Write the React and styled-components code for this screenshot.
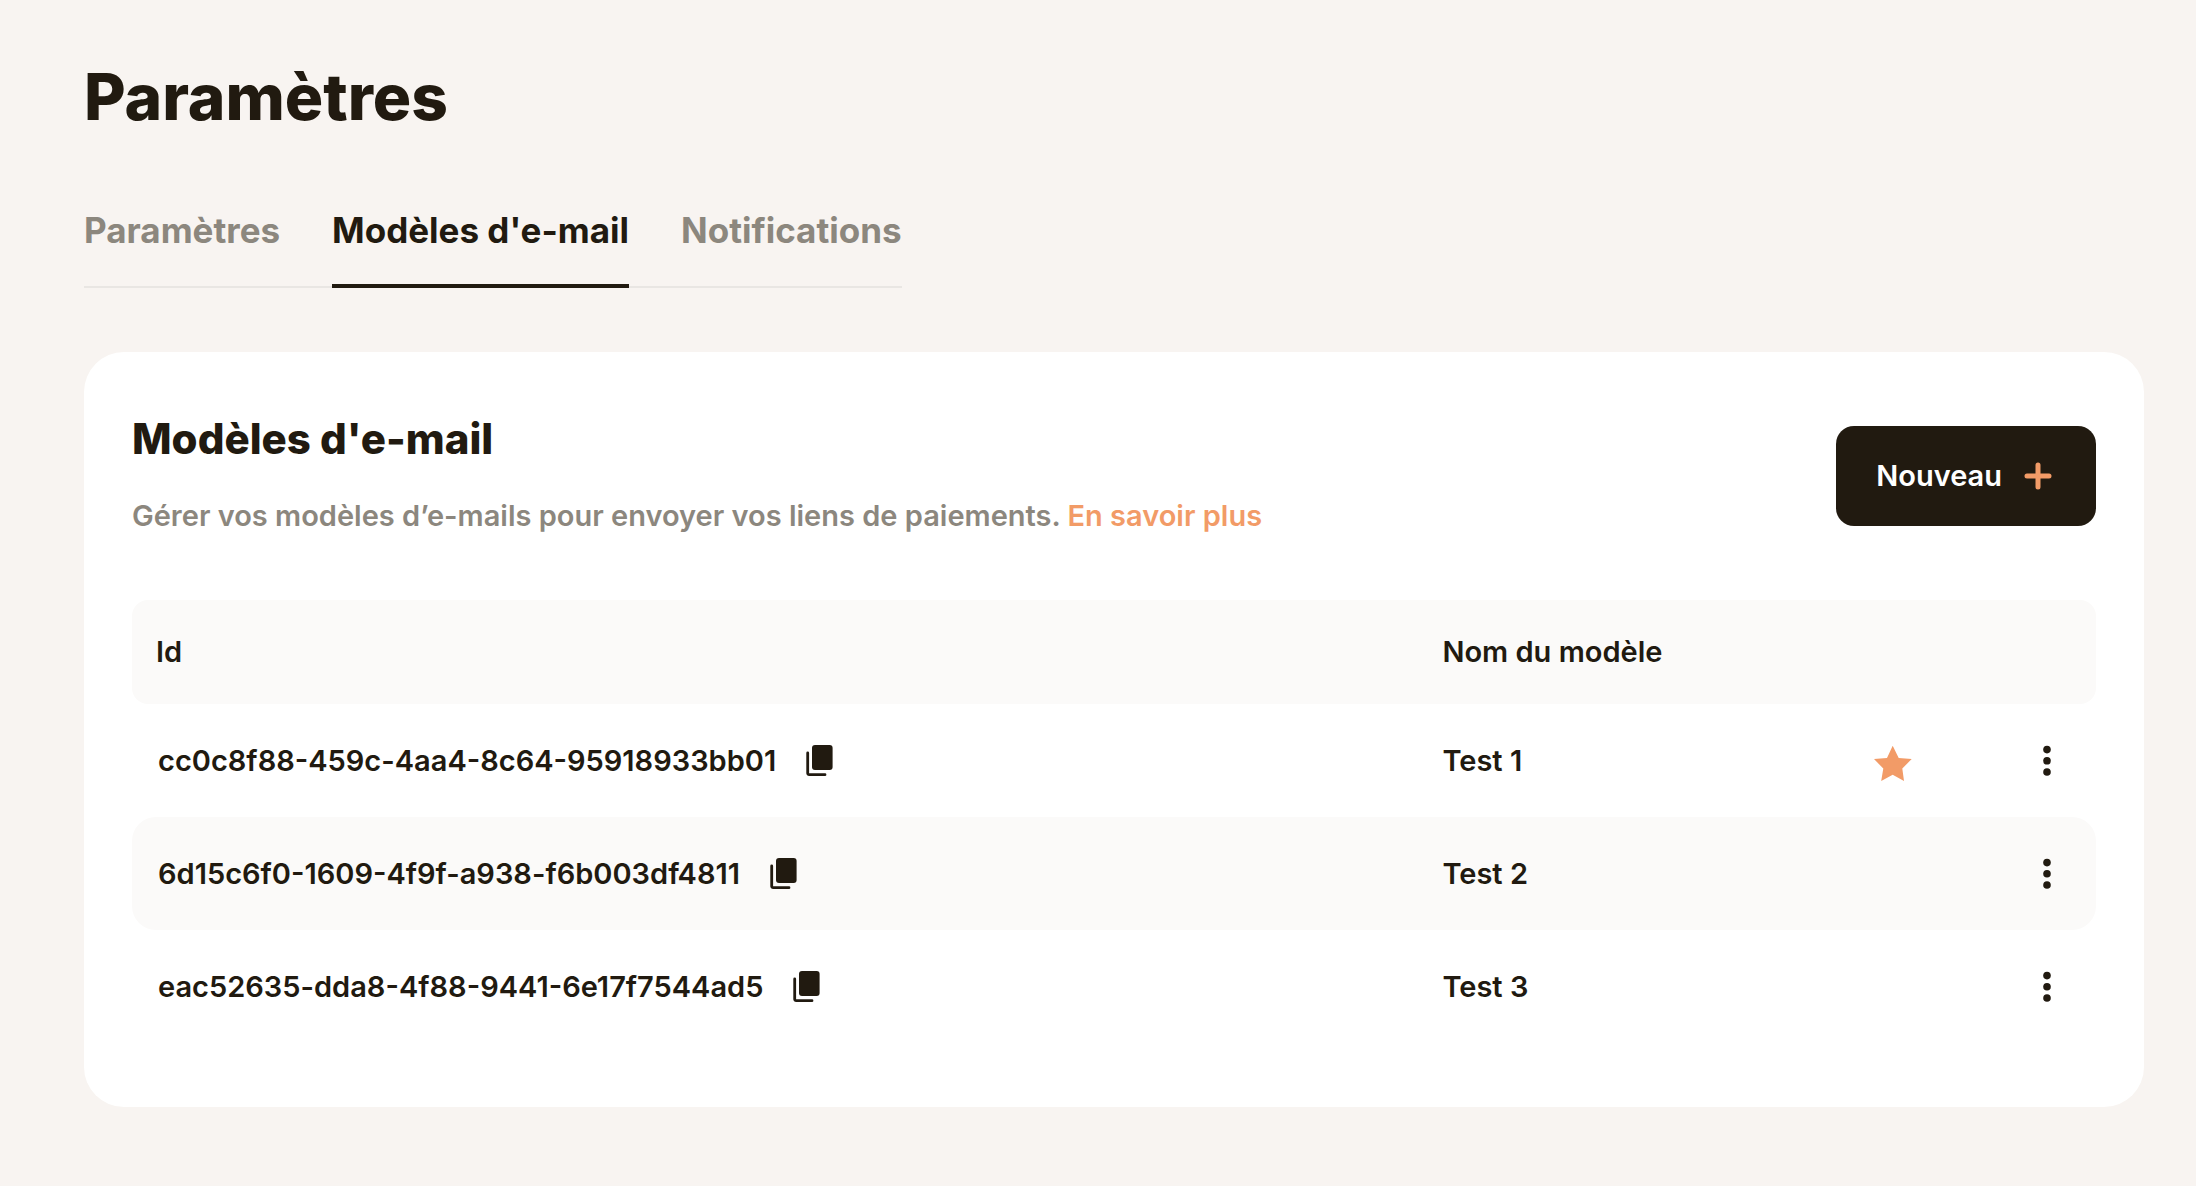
import React from "react";
import styled, { createGlobalStyle } from "styled-components";

const ink = "#211a10";
const muted = "#8c877e";
const accent = "#f29b67";
const stripe = "#fbfaf9";

const GlobalStyle = createGlobalStyle`
  *, *::before, *::after {
    box-sizing: border-box;
  }

  body {
    margin: 0;
    background: #f8f4f1;
    color: ${ink};
    font-family: Inter, "Liberation Sans", sans-serif;
    font-size: 29px;
    font-weight: 600;
    line-height: 44px;
  }
`;

const Page = styled.main`
  padding: 60px 52px 78px 84px;
`;

const PageTitle = styled.h1`
  margin: 0 0 76px;
  font-size: 64px;
  font-weight: 800;
  line-height: 74px;
`;

const Tabs = styled.nav`
  display: flex;
  gap: 52px;
  width: fit-content;
  margin-bottom: 64px;
  box-shadow: inset 0 -2px 0 #e9e6e3;
`;

const Tab = styled.a`
  padding-bottom: 34px;
  border-bottom: 4px solid ${({ $active }) => ($active ? ink : "transparent")};
  color: ${({ $active }) => ($active ? ink : muted)};
  font-size: 35px;
  font-weight: 700;
  line-height: 40px;
  text-decoration: none;
`;

const Card = styled.section`
  padding: 48px 48px 64px;
  border-radius: 40px;
  background: #fff;
`;

const CardHeader = styled.header`
  display: flex;
  align-items: center;
  justify-content: space-between;
  gap: 48px;
  margin-bottom: 48px;
  padding: 14px 0;
`;

const Heading = styled.div`
  display: grid;
  gap: 30px;
`;

const CardTitle = styled.h2`
  margin: 0;
  font-size: 42px;
  font-weight: 800;
  line-height: 50px;
`;

const Description = styled.p`
  margin: 0;
  color: ${muted};
`;

const MoreLink = styled.a`
  color: ${accent};
  text-decoration: none;
`;

const PrimaryButton = styled.button`
  display: flex;
  flex: none;
  align-items: center;
  gap: 20px;
  height: 100px;
  padding: 0 42px 0 40px;
  border: 0;
  border-radius: 18px;
  background: ${ink};
  color: #fff;
  font: inherit;
  cursor: pointer;
`;

const Table = styled.table`
  width: 100%;
  table-layout: fixed;
  border-collapse: separate;
  border-spacing: 0;
`;

const IdColumn = styled.col`
  width: 65.5%;
`;

const StarColumn = styled.col`
  width: 210px;
`;

const MenuColumn = styled.col`
  width: 98px;
`;

const HeadCell = styled.th`
  height: 104px;
  padding: 0 24px;
  background: ${stripe};
  font-weight: inherit;
  text-align: left;

  &:first-child {
    border-radius: 16px 0 0 16px;
  }

  &:last-child {
    border-radius: 0 16px 16px 0;
  }
`;

const Cell = styled.td`
  height: 113px;
  padding: 0 24px;

  &:first-child {
    border-radius: 24px 0 0 24px;
    padding-left: 26px;
  }

  &:last-child {
    border-radius: 0 24px 24px 0;
  }

  tr:nth-child(even) > & {
    background: ${stripe};
  }
`;

const IconCell = styled(Cell)`
  padding: 0;
`;

const Centered = styled.div`
  display: flex;
  justify-content: center;
`;

const IdGroup = styled.div`
  display: flex;
  align-items: center;
  gap: 30px;
`;

const IconButton = styled.button`
  display: flex;
  padding: 0;
  border: 0;
  background: none;
  color: ${ink};
  cursor: pointer;
`;

const PlusIcon = () => (
  <svg width="32" height="32" viewBox="0 0 32 32" fill="none" stroke={accent} strokeWidth="5" strokeLinecap="round" aria-hidden="true">
    <path d="M16 5v22M5 16h22" />
  </svg>
);

const CopyIcon = () => (
  <svg width="28" height="32" viewBox="0 0 28 32" fill="none" aria-hidden="true">
    <rect x="6" y="0" width="20.6" height="25" rx="3" fill="currentColor" />
    <path d="M1.7 8v20.3a1.4 1.4 0 0 0 1.4 1.4H19" stroke="currentColor" strokeWidth="2.8" strokeLinecap="round" />
  </svg>
);

const StarIcon = () => (
  <svg width="38" height="40" viewBox="0 -5 38 40" fill={accent} role="img" aria-label="Modèle par défaut">
    <path d="M18.7 -.3 24.7 12 37.7 13.1 28.3 22.4 30 35 18.7 28.8 7.2 35 9.3 22.4 0 13.1 13 12Z" />
  </svg>
);

const MenuIcon = () => (
  <svg width="32" height="32" viewBox="0 0 32 32" fill="currentColor" aria-hidden="true">
    <circle cx="16" cy="4.6" r="3.8" />
    <circle cx="16" cy="15.8" r="3.8" />
    <circle cx="16" cy="27" r="3.8" />
  </svg>
);

const tabs = [
  { label: "Paramètres" },
  { label: "Modèles d'e-mail", active: true },
  { label: "Notifications" },
];

const templates = [
  { id: "cc0c8f88-459c-4aa4-8c64-95918933bb01", name: "Test 1", isDefault: true },
  { id: "6d15c6f0-1609-4f9f-a938-f6b003df4811", name: "Test 2" },
  { id: "eac52635-dda8-4f88-9441-6e17f7544ad5", name: "Test 3" },
];

export default function App() {
  return (
    <>
      <GlobalStyle />
      <Page>
        <PageTitle>Paramètres</PageTitle>
        <Tabs>
          {tabs.map(({ label, active }) => (
            <Tab key={label} href="#" $active={active} aria-current={active ? "page" : undefined}>
              {label}
            </Tab>
          ))}
        </Tabs>
        <Card>
          <CardHeader>
            <Heading>
              <CardTitle>Modèles d'e-mail</CardTitle>
              <Description>
                Gérer vos modèles d’e-mails pour envoyer vos liens de paiements.{" "}
                <MoreLink href="#">En savoir plus</MoreLink>
              </Description>
            </Heading>
            <PrimaryButton type="button">
              Nouveau
              <PlusIcon />
            </PrimaryButton>
          </CardHeader>
          <Table>
            <colgroup>
              <IdColumn />
              <col />
              <StarColumn />
              <MenuColumn />
            </colgroup>
            <thead>
              <tr>
                <HeadCell scope="col">Id</HeadCell>
                <HeadCell scope="col">Nom du modèle</HeadCell>
                <HeadCell as="td" />
                <HeadCell as="td" />
              </tr>
            </thead>
            <tbody>
              {templates.map(({ id, name, isDefault }) => (
                <tr key={id}>
                  <Cell>
                    <IdGroup>
                      {id}
                      <IconButton type="button" aria-label="Copier l'identifiant">
                        <CopyIcon />
                      </IconButton>
                    </IdGroup>
                  </Cell>
                  <Cell>{name}</Cell>
                  <IconCell>
                    <Centered>{isDefault && <StarIcon />}</Centered>
                  </IconCell>
                  <IconCell>
                    <Centered>
                      <IconButton type="button" aria-label={`Actions pour ${name}`}>
                        <MenuIcon />
                      </IconButton>
                    </Centered>
                  </IconCell>
                </tr>
              ))}
            </tbody>
          </Table>
        </Card>
      </Page>
    </>
  );
}
